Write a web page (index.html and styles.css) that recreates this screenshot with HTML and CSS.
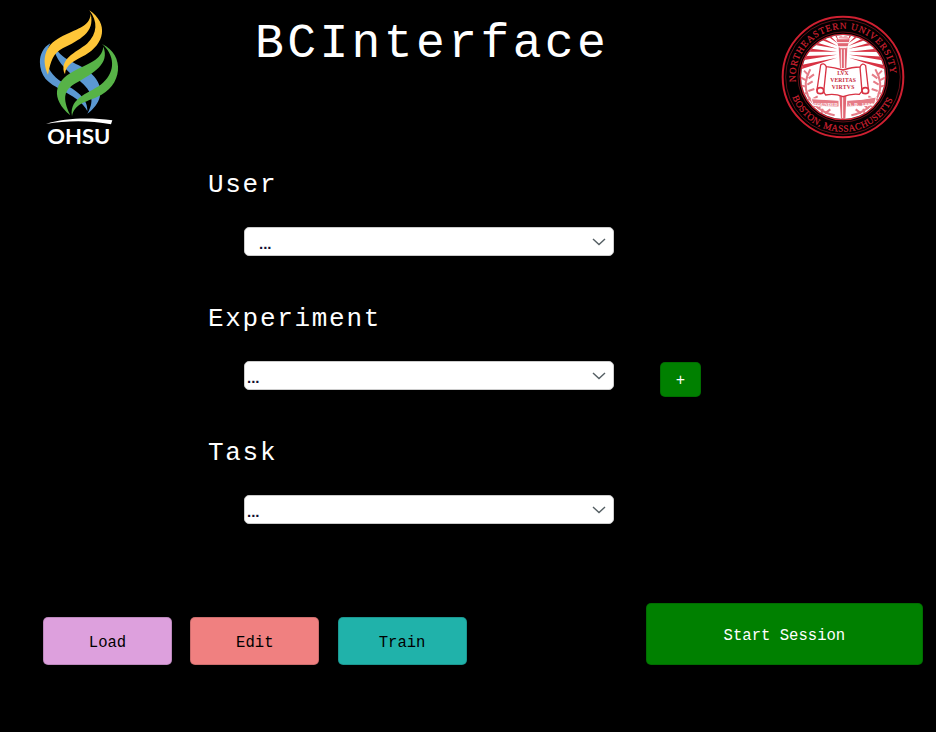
FILE: index.html
```html
<!DOCTYPE html>
<html lang="en">
<head>
<meta charset="utf-8">
<title>BCInterface</title>
<link rel="stylesheet" href="styles.css">
</head>
<body>
<header class="header">
  <svg class="ohsu" viewBox="0 0 300 465" role="img" aria-label="OHSU">
    <path fill="#5b98d2" d="M61 130C22 152 22 205 47 237C79 272 147 284 172 333C174 292 138 273 99 248C51 219 37 178 61 130Z"/>
    <path fill="#5b98d2" d="M73 137C70 175 109 211 142 237C180 266 199 296 172 341C212 312 226 269 193 230C158 187 99 190 73 137Z"/>
    <path fill="#ffc638" d="M182 41C180 82 136 86 91 112C43 137 34 181 54 224C62 182 70 160 98 145C148 119 196 98 182 41Z"/>
    <path fill="#ffc638" d="M178 31C204 64 203 101 171 131C136 158 85 178 105 223C107 192 134 182 166 165C224 132 237 71 178 31Z"/>
    <path fill="#57b347" d="M220 140C215 182 174 189 128 215C73 245 61 295 121 346C95 292 103 269 138 249C192 218 240 191 220 140Z"/>
    <path fill="#57b347" d="M216 132C254 164 258 214 219 248C183 280 117 288 126 349C133 311 168 306 201 291C279 259 286 164 216 132Z"/>
    <path fill="#fff" d="M48 372C105 354 177 352 247 361L243 373C176 360 106 362 48 372Z"/>
    <text class="ohsu-name" x="52" y="432" textLength="189" lengthAdjust="spacingAndGlyphs">OHSU</text>
  </svg>
  <h1 class="title">BCInterface</h1>
  <svg class="seal" viewBox="0 0 408 408" role="img" aria-label="Northeastern University">
    <defs>
      <path id="arc-top" d="M63 222A142 142 0 1 1 345 222"/>
      <path id="arc-bottom" d="M52 267A163 163 0 0 0 356 267"/>
      <clipPath id="disc"><circle cx="204" cy="207" r="126"/></clipPath>
    </defs>
    <g fill="none" stroke="#cf2031">
      <circle cx="204" cy="207" r="181" stroke-width="6"/>
      <circle cx="204" cy="207" r="172" stroke-width="2" opacity=".7"/>
      <circle cx="204" cy="207" r="135" stroke-width="2" opacity=".7"/>
      <circle cx="204" cy="207" r="128" stroke-width="4"/>
    </g>
    <g class="seal-text">
      <text><textPath href="#arc-top" textLength="455">NORTHEASTERN UNIVERSITY</textPath></text>
      <text><textPath href="#arc-bottom" textLength="384">BOSTON, MASSACHUSETTS</textPath></text>
    </g>
    <circle cx="204" cy="207" r="126" fill="#fff"/>
    <g clip-path="url(#disc)">
      <path fill="#d83243" d="M191 100L173 70L180 68ZM189 107L145 75L154 71ZM188 114L118 88L128 81ZM187 122L98 107L107 98ZM186 131L84 131L90 120ZM186 140L74 158L78 145ZM186 149L70 186L72 172ZM217 100L229 68L237 71ZM219 107L254 72L263 76ZM220 114L280 82L290 89ZM221 122L301 99L310 108ZM222 131L319 121L325 132ZM222 140L330 146L334 159ZM222 149L337 173L339 187Z"/>
      <path fill="#e16673" d="M184 94H224L218 115H190ZM191 118H217L214 180H195ZM193 262H214L211 335H198Z"/>
      <path stroke="#fff" stroke-width="3" d="M185 104H223M194 119H215M199 124V180M208 124V180M203 264V330"/>
      <path fill="#f2a5ad" d="M190 91Q195 78 204 87Q216 77 221 93Z"/>
      <g fill="none" stroke="#e67c87" stroke-width="6">
        <path d="M106 184Q82 226 99 264Q126 311 179 322M301 184Q326 226 309 264Q282 311 229 322"/>
        <path stroke-width="6" d="M101 202L87 188M95 218L77 208M94 236L76 232M99 254L83 258M107 270L95 281M122 287L113 303M143 302L139 318M101 211L117 199M97 230L113 220M100 249L118 243M112 274L128 265M128 302L143 289M150 316L166 304M307 202L321 188M313 218L331 208M314 236L332 232M309 254L325 258M301 270L313 281M286 287L295 303M265 302L269 318M307 211L291 199M311 230L295 220M308 249L290 243M296 274L280 265M280 302L265 289M258 316L242 304"/>
      </g>
      <path fill="#fff" stroke="#d83243" stroke-width="4" d="M137 171Q146 162 154 176Q178 178 204 186Q232 177 255 177Q262 162 272 173L280 243Q275 261 260 251L253 259Q229 256 204 266Q178 255 152 261L146 251Q132 263 126 246Z"/>
      <path fill="none" stroke="#d83243" stroke-width="4" d="M154 176L146 252M255 177L261 251"/>
      <ellipse cx="136" cy="248" rx="10" ry="9" fill="#fff" stroke="#d83243" stroke-width="5"/>
      <ellipse cx="271" cy="248" rx="10" ry="9" fill="#fff" stroke="#d83243" stroke-width="5"/>
      <path fill="#e67c87" stroke="#fff" stroke-width="3" d="M108 272Q145 274 192 277V297Q152 298 116 292ZM215 277Q263 276 304 267L299 288Q261 297 215 297Z"/>
      <g class="seal-ribbon"><text x="118" y="293" textLength="70">FOUNDED</text><text x="220" y="293" textLength="74">A.D. 1898</text></g>
      <g class="seal-motto"><text x="204" y="202">LVX</text><text x="204" y="223" textLength="77">VERITAS</text><text x="204" y="244" textLength="68">VIRTVS</text></g>
    </g>
  </svg>
</header>
<main class="fields">
  <section class="field">
    <h2 class="label">User</h2>
    <div class="row">
      <div class="select select-inset"><span>...</span><svg class="chevron" viewBox="0 0 14 8"><path d="M1 1L7 6.6L13 1"/></svg></div>
    </div>
  </section>
  <section class="field">
    <h2 class="label">Experiment</h2>
    <div class="row">
      <div class="select"><span>...</span><svg class="chevron" viewBox="0 0 14 8"><path d="M1 1L7 6.6L13 1"/></svg></div>
      <button class="button go add">+</button>
    </div>
  </section>
  <section class="field">
    <h2 class="label">Task</h2>
    <div class="row">
      <div class="select"><span>...</span><svg class="chevron" viewBox="0 0 14 8"><path d="M1 1L7 6.6L13 1"/></svg></div>
    </div>
  </section>
</main>
<footer class="actions">
  <button class="button load">Load</button>
  <button class="button edit">Edit</button>
  <button class="button train">Train</button>
  <button class="button go start">Start Session</button>
</footer>
</body>
</html>
```
FILE: styles.css
```css
* { box-sizing: border-box; }
body {
  margin: 0;
  width: 936px;
  height: 732px;
  overflow: hidden;
  background: #000;
  color: #fff;
  font-family: "Courier New", "Liberation Mono", monospace;
}
.header {
  display: flex;
  align-items: flex-start;
  height: 165px;
  padding-left: 30px;
}
.ohsu { width: 100px; height: 155px; flex: none; }
.ohsu-name { font: 700 61px Lato, sans-serif; fill: #fff; }
.title {
  width: 519px;
  margin: 14px 0 0 125px;
  font-size: 48px;
  line-height: 60px;
  font-weight: 400;
  letter-spacing: 3.4px;
}
.seal { width: 136px; height: 136px; margin: 8px 0 0 1px; flex: none; }
.seal-text { font: 28px "Liberation Serif", serif; fill: #cf2031; stroke: #cf2031; stroke-width: .6px; }
.seal-ribbon { font: 700 14px "Liberation Serif", serif; fill: #fff; }
.seal-motto { font: 700 17px "Liberation Serif", serif; fill: #c82a3c; text-anchor: middle; }
.fields { padding-left: 208px; }
.field { height: 134px; }
.label {
  margin: 0;
  height: 62px;
  padding-top: 4px;
  font-size: 26px;
  line-height: 32px;
  font-weight: 400;
  letter-spacing: 1.7px;
}
.row { display: flex; align-items: flex-start; gap: 46px; padding-left: 36px; }
.select {
  display: flex;
  align-items: center;
  justify-content: space-between;
  width: 370px;
  height: 29px;
  padding: 3px 7px 0 2px;
  border: 1px solid #ccc;
  border-radius: 5px;
  background: #fff;
  color: #101030;
  font: 700 15px "Liberation Sans", sans-serif;
}
.select-inset { padding-left: 14px; }
.chevron { width: 14px; height: 8px; margin-top: -2px; }
.chevron path { fill: none; stroke: #555f64; stroke-width: 1.4; }
.button {
  padding: 3px 0 0;
  border: 1px solid rgba(0, 0, 0, .15);
  border-radius: 5px;
  color: #000;
  font-family: inherit;
  font-size: 15.6px;
}
.go { background: #008000; color: #fff; }
.add { width: 41px; height: 35px; margin-top: 1px; }
.actions {
  display: flex;
  align-items: flex-end;
  gap: 18.3px;
  height: 98px;
  padding-left: 43px;
}
.load, .edit, .train { width: 129px; height: 48px; padding-top: 4px; }
.load { background: #dda0dd; }
.edit { background: #f08080; }
.train { background: #20b2aa; }
.start { width: 277px; height: 62px; margin-left: 161px; }
```
